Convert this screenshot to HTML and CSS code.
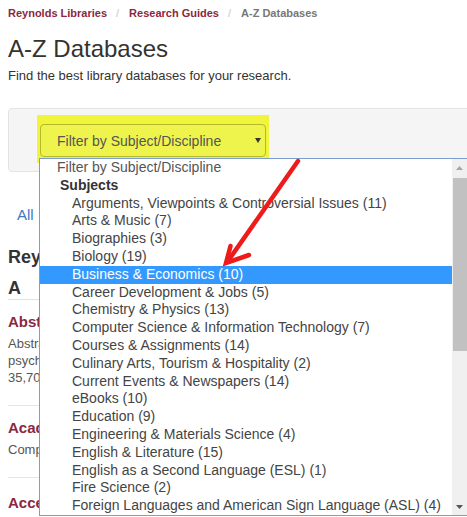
FILE: index.html
```html
<!DOCTYPE html>
<html lang="en">
<head>
<meta charset="utf-8">
<title>A-Z Databases</title>
<link rel="stylesheet" href="styles.css">
</head>
<body>
<div class="page">
  <nav class="crumbs">
    <a href="#">Reynolds Libraries</a><span class="sep">/</span><a href="#">Research Guides</a><span class="sep">/</span><span class="cur">A-Z Databases</span>
  </nav>
  <h1>A-Z Databases</h1>
  <p class="lead">Find the best library databases for your research.</p>
  <div class="panel">
    <div class="hl">
      <div class="select"><span>Filter by Subject/Discipline</span><span class="caret"></span></div>
    </div>
  </div>
  <div class="tabs"><a href="#">All</a></div>
  <h2>Reynolds Libraries Databases</h2>
  <h3>A</h3>
  <div class="db">
    <div class="t">Abstracts in Social Gerontology</div>
    <div class="d">Abstracts of articles in gerontology and related fields<br>psychology, sociology and social work, with more than<br>35,700 records.</div>
  </div>
  <div class="db">
    <div class="t">Academic Search Complete</div>
    <div class="d">Comprehensive scholarly, multi-disciplinary full-text database.</div>
  </div>
  <div class="db last">
    <div class="t">AccessScience</div>
  </div>
</div>

<div class="dropdown">
  <div class="opts">
    <div class="opt ph">Filter by Subject/Discipline</div>
    <div class="opt grp">Subjects</div>
    <div class="opt">Arguments, Viewpoints &amp; Controversial Issues (11)</div>
    <div class="opt">Arts &amp; Music (7)</div>
    <div class="opt">Biographies (3)</div>
    <div class="opt">Biology (19)</div>
    <div class="opt sel">Business &amp; Economics (10)</div>
    <div class="opt">Career Development &amp; Jobs (5)</div>
    <div class="opt">Chemistry &amp; Physics (13)</div>
    <div class="opt">Computer Science &amp; Information Technology (7)</div>
    <div class="opt">Courses &amp; Assignments (14)</div>
    <div class="opt">Culinary Arts, Tourism &amp; Hospitality (2)</div>
    <div class="opt">Current Events &amp; Newspapers (14)</div>
    <div class="opt">eBooks (10)</div>
    <div class="opt">Education (9)</div>
    <div class="opt">Engineering &amp; Materials Science (4)</div>
    <div class="opt">English &amp; Literature (15)</div>
    <div class="opt">English as a Second Language (ESL) (1)</div>
    <div class="opt">Fire Science (2)</div>
    <div class="opt">Foreign Languages and American Sign Language (ASL) (4)</div>
  </div>
  <div class="sbar">
    <div class="sbtn"><svg width="7" height="4" viewBox="0 0 7 4"><polygon points="0,4 3.5,0 7,4" fill="#a6a6a6"/></svg></div>
    <div class="thumb"></div>
    <div class="track"></div>
    <div class="sbtn"><svg width="7" height="4" viewBox="0 0 7 4"><polygon points="0,0 7,0 3.5,4" fill="#555"/></svg></div>
  </div>
</div>

<svg class="arrow" width="467" height="517" viewBox="0 0 467 517">
  <line x1="298" y1="161" x2="228" y2="261" stroke="#ee1b1b" stroke-width="4.5" stroke-linecap="round"/>
  <polyline points="230.5,246 226,263 249,255" fill="none" stroke="#ee1b1b" stroke-width="4.5" stroke-linecap="round" stroke-linejoin="miter"/>
</svg>
</body>
</html>
```

FILE: styles.css
```css
html, body {
  margin: 0;
  padding: 0;
}
body {
  font-family: "Liberation Sans", Arial, Helvetica, sans-serif;
  color: #333;
  background: #fff;
  overflow: hidden;
  position: relative;
  min-height: 517px;
}
.page {
  padding: 0 8px;
}
.crumbs {
  margin-top: 5px;
  display: flex;
  font-size: 11px;
  font-weight: bold;
  line-height: 16px;
  white-space: nowrap;
}
.crumbs a {
  color: #8b2840;
  text-decoration: none;
}
.crumbs .sep {
  color: #c8c8c8;
  font-weight: normal;
  padding: 0 10px 0 9px;
}
.crumbs .cur {
  color: #777;
}
h1 {
  margin: 14px 0 0;
  font-size: 24px;
  font-weight: normal;
  line-height: 28px;
  color: #333;
}
.lead {
  margin: 4px 0 0;
  font-size: 13px;
  line-height: 18px;
  color: #333;
}
.panel {
  margin: 23px -40px 0 0;
  border: 1px solid #e3e3e3;
  border-radius: 4px;
  background: #f5f5f5;
  padding: 6px 0 8px 28px;
}
.hl {
  width: 232px;
  box-sizing: border-box;
  background: #f0f53c;
  padding: 9px 3px 6px;
}
.select {
  height: 33px;
  box-sizing: border-box;
  border: 1px solid #b3b82c;
  border-radius: 4px;
  background: #eef44c;
  display: flex;
  align-items: center;
  justify-content: space-between;
  padding: 0 4px 0 16px;
  font-size: 14px;
  color: #555;
}
.caret {
  width: 0;
  height: 0;
  border-left: 3.5px solid transparent;
  border-right: 3.5px solid transparent;
  border-top: 5px solid #333;
}
.tabs {
  margin-top: 33px;
  padding-left: 9px;
  font-size: 15px;
  line-height: 20px;
}
.tabs a {
  color: #3f79c2;
  text-decoration: none;
}
h2 {
  margin: 21px 0 0;
  font-size: 18px;
  font-weight: bold;
  line-height: 22px;
}
h3 {
  margin: 10px 0 0;
  font-size: 18px;
  font-weight: bold;
  line-height: 21px;
  border-bottom: 1px solid #e2e2e2;
}
.db {
  padding: 12px 0 19px;
  border-bottom: 1px solid #e5e5e5;
}
.db.last {
  border-bottom: none;
  padding-top: 15px;
}
.db .t {
  font-size: 15px;
  font-weight: bold;
  line-height: 20px;
  color: #8b2840;
}
.db .d {
  margin-top: 3px;
  font-size: 13px;
  line-height: 17px;
  color: #555;
}
.dropdown {
  position: absolute;
  left: 39px;
  top: 158px;
  width: 429px;
  height: 358px;
  box-sizing: border-box;
  border: 1px solid #7d9ccf;
  background: #fff;
  display: flex;
  font-size: 14px;
  color: #444;
}
.opts {
  flex: 1;
  min-width: 0;
}
.opt {
  height: 17.8px;
  line-height: 17.8px;
  padding-left: 32px;
  white-space: nowrap;
  overflow: hidden;
}
.opt.ph {
  padding-left: 17px;
  color: #555;
}
.opt.grp {
  padding-left: 20px;
  font-weight: bold;
  color: #333;
}
.opt.sel {
  background: #3399ff;
  color: #fff;
}
.sbar {
  width: 15px;
  background: #f0f0f0;
  display: flex;
  flex-direction: column;
}
.sbtn {
  height: 17px;
  display: flex;
  align-items: center;
  justify-content: center;
}
.thumb {
  margin: 2px 0 0 1px;
  height: 173px;
  background: #c1c1c1;
}
.track {
  flex: 1;
}
.arrow {
  position: absolute;
  left: 0;
  top: 0;
  pointer-events: none;
}
```
